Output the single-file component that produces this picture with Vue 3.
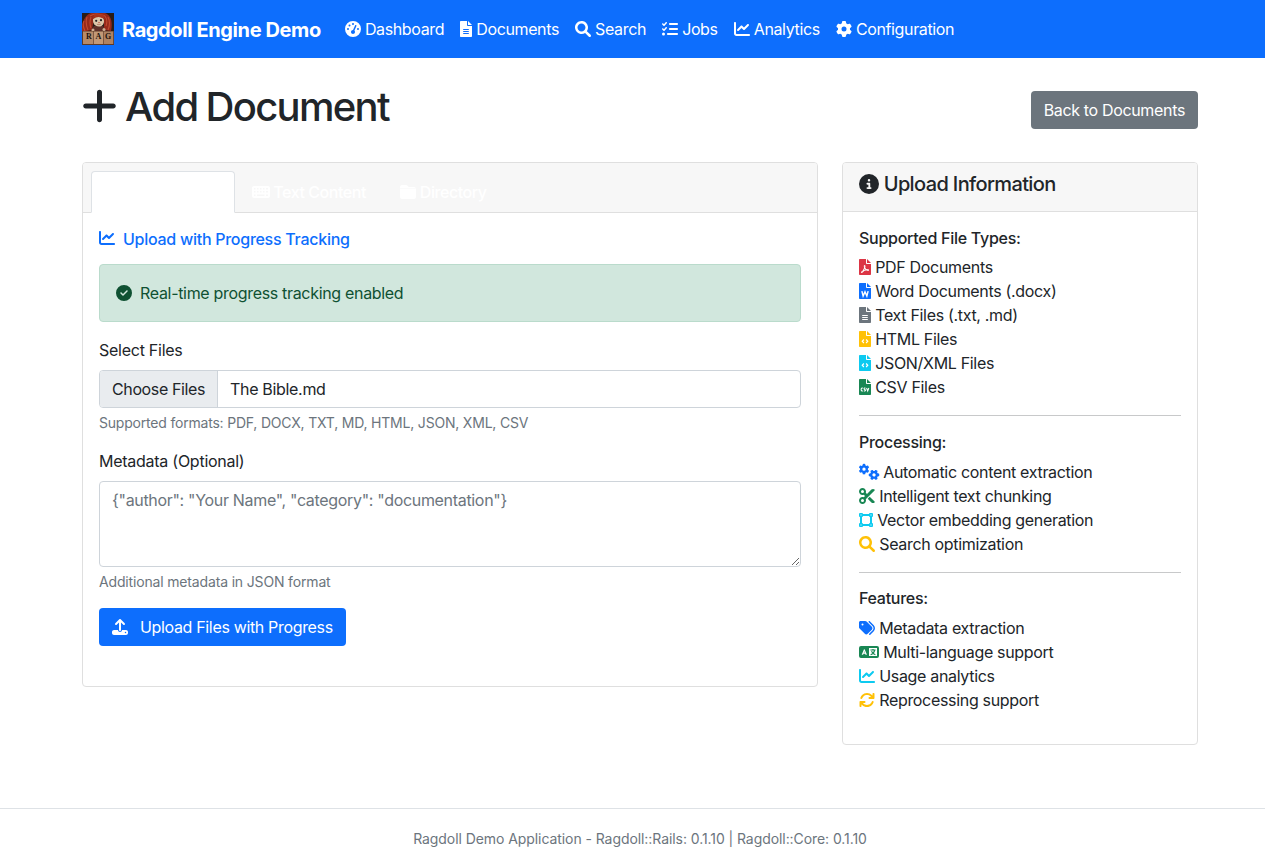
<script setup>
import { h } from 'vue'

const body = 'M32 0C14 0 0 14 0 32V480c0 18 14 32 32 32H352c18 0 32-14 32-32V160H256c-17.7 0-32-14.3-32-32V0H32zM256 0V128H384L256 0z'

const icons = {
  gauge: [512, 'M0 256a256 256 0 1 1 512 0A256 256 0 1 1 0 256zM288 96a32 32 0 1 0 -64 0 32 32 0 1 0 64 0zM256 416c35.3 0 64-28.7 64-64c0-17.4-6.9-33.1-18.1-44.6L366 161.7c5.3-12.1-.2-26.3-12.3-31.6s-26.3 .2-31.6 12.3L257.9 288c-.6 0-1.3 0-1.9 0c-35.3 0-64 28.7-64 64s28.7 64 64 64zM176 144a32 32 0 1 0 -64 0 32 32 0 1 0 64 0zM96 288a32 32 0 1 0 0-64 32 32 0 1 0 0 64zm352-32a32 32 0 1 0 -64 0 32 32 0 1 0 64 0z'],
  file: [384, body + 'M112 256H272c8.8 0 16 7.2 16 16s-7.2 16-16 16H112c-8.8 0-16-7.2-16-16s7.2-16 16-16zm0 64H272c8.8 0 16 7.2 16 16s-7.2 16-16 16H112c-8.8 0-16-7.2-16-16s7.2-16 16-16zm0 64H272c8.8 0 16 7.2 16 16s-7.2 16-16 16H112c-8.8 0-16-7.2-16-16s7.2-16 16-16z'],
  search: [512, 'M500.3 443.7l-119.7-119.7c27.22-40.41 40.65-90.9 33.46-144.7C401.8 87.79 326.8 13.32 235.2 1.723C99.01-15.51-15.51 99.01 1.724 235.2c11.6 91.64 86.08 166.7 177.6 178.9c53.8 7.189 104.3-6.236 144.7-33.46l119.7 119.7c15.62 15.62 40.95 15.62 56.57 0C515.9 484.7 515.9 459.3 500.3 443.7zM79.1 208c0-70.58 57.42-128 128-128s128 57.42 128 128c0 70.58-57.42 128-128 128S79.1 278.6 79.1 208z'],
  tasks: [512, 'M152.1 38.2c9.9 8.9 10.7 24 1.8 33.9l-72 80c-4.4 4.9-10.6 7.8-17.2 7.9s-12.9-2.4-17.6-7L7 113C-2.3 103.6-2.3 88.4 7 79s24.6-9.4 33.9 0l22.1 22.1 55.1-61.2c8.9-9.9 24-10.7 33.9-1.8zm0 160c9.9 8.9 10.7 24 1.8 33.9l-72 80c-4.4 4.9-10.6 7.8-17.2 7.9s-12.9-2.4-17.6-7L7 273c-9.4-9.4-9.4-24.6 0-33.9s24.6-9.4 33.9 0l22.1 22.1 55.1-61.2c8.9-9.9 24-10.7 33.9-1.8zM224 96c0-17.7 14.3-32 32-32H480c17.7 0 32 14.3 32 32s-14.3 32-32 32H256c-17.7 0-32-14.3-32-32zm0 160c0-17.7 14.3-32 32-32H480c17.7 0 32 14.3 32 32s-14.3 32-32 32H256c-17.7 0-32-14.3-32-32zM160 416c0-17.7 14.3-32 32-32H480c17.7 0 32 14.3 32 32s-14.3 32-32 32H192c-17.7 0-32-14.3-32-32zM48 368a48 48 0 1 1 0 96 48 48 0 1 1 0-96z'],
  chart: [512, 'M64 64c0-17.7-14.3-32-32-32S0 46.3 0 64V400c0 44.2 35.8 80 80 80H480c17.7 0 32-14.3 32-32s-14.3-32-32-32H80c-8.8 0-16-7.2-16-16V64zm406.6 86.6c12.5-12.5 12.5-32.8 0-45.3s-32.8-12.5-45.3 0L320 210.7l-57.4-57.4c-12.5-12.5-32.8-12.5-45.3 0l-112 112c-12.5 12.5-12.5 32.8 0 45.3s32.8 12.5 45.3 0L240 221.3l57.4 57.4c12.5 12.5 32.8 12.5 45.3 0l128-128z'],
  gear: [512, 'M495.9 166.6c3.2 8.7 .5 18.4-6.4 24.6l-43.3 39.4c1.1 8.3 1.7 16.8 1.7 25.4s-.6 17.1-1.7 25.4l43.3 39.4c6.9 6.2 9.6 15.9 6.4 24.6c-4.4 11.9-9.7 23.3-15.8 34.3l-4.7 8.1c-6.6 11-14 21.4-22.1 31.2c-5.9 7.2-15.7 9.6-24.5 6.8l-55.7-17.7c-13.4 10.3-28.2 18.9-44 25.4l-12.5 57.1c-2 9.1-9 16.3-18.2 17.8c-13.8 2.3-28 3.5-42.5 3.5s-28.7-1.2-42.5-3.5c-9.2-1.5-16.2-8.7-18.2-17.8l-12.5-57.1c-15.8-6.5-30.6-15.1-44-25.4L83.1 425.9c-8.8 2.8-18.6 .3-24.5-6.8c-8.1-9.8-15.5-20.2-22.1-31.2l-4.7-8.1c-6.1-11-11.4-22.4-15.8-34.3c-3.2-8.7-.5-18.4 6.4-24.6l43.3-39.4C64.6 273.1 64 264.6 64 256s.6-17.1 1.7-25.4L22.4 191.2c-6.9-6.2-9.6-15.9-6.4-24.6c4.4-11.9 9.7-23.3 15.8-34.3l4.7-8.1c6.6-11 14-21.4 22.1-31.2c5.9-7.2 15.7-9.6 24.5-6.8l55.7 17.7c13.4-10.3 28.2-18.9 44-25.4l12.5-57.1c2-9.1 9-16.3 18.2-17.8C227.3 1.2 241.5 0 256 0s28.7 1.2 42.5 3.5c9.2 1.5 16.2 8.7 18.2 17.8l12.5 57.1c15.8 6.5 30.6 15.1 44 25.4l55.7-17.7c8.8-2.8 18.6-.3 24.5 6.8c8.1 9.8 15.5 20.2 22.1 31.2l4.7 8.1c6.1 11 11.4 22.4 15.8 34.3zM256 336a80 80 0 1 0 0-160 80 80 0 1 0 0 160z'],
  plus: [448, 'M256 80c0-17.7-14.3-32-32-32s-32 14.3-32 32V224H48c-17.7 0-32 14.3-32 32s14.3 32 32 32H192V432c0 17.7 14.3 32 32 32s32-14.3 32-32V288H400c17.7 0 32-14.3 32-32s-14.3-32-32-32H256V80z'],
  keyboard: [576, 'M64 64C28.7 64 0 92.7 0 128V384c0 35.3 28.7 64 64 64H512c35.3 0 64-28.7 64-64V128c0-35.3-28.7-64-64-64H64zM64 128h48v48H64zM160 128h48v48h-48zM256 128h48v48h-48zM352 128h48v48h-48zM448 128h64v48h-64zM64 224h48v48H64zM160 224h48v48h-48zM256 224h48v48h-48zM352 224h48v48h-48zM448 224h64v48h-64zM64 336h48v48H64zM160 336h240v48H160zM448 336h64v48h-64z'],
  folder: [512, 'M64 480H448c35.3 0 64-28.7 64-64V160c0-35.3-28.7-64-64-64H288c-10.1 0-19.6-4.7-25.6-12.8L243.2 57.6C231.1 41.5 212.1 32 192 32H64C28.7 32 0 60.7 0 96V416c0 35.3 28.7 64 64 64zM0 132V150H512V132z'],
  check: [512, 'M256 512A256 256 0 1 0 256 0a256 256 0 1 0 0 512zM369 209L241 337c-9.4 9.4-24.6 9.4-33.9 0l-64-64c-9.4-9.4-9.4-24.6 0-33.9s24.6-9.4 33.9 0l47 47L335 175c9.4-9.4 24.6-9.4 33.9 0s9.4 24.6 0 33.9z'],
  info: [512, 'M256 512A256 256 0 1 0 256 0a256 256 0 1 0 0 512zM216 336h24V272H216c-13.3 0-24-10.7-24-24s10.7-24 24-24h48c13.3 0 24 10.7 24 24v88h8c13.3 0 24 10.7 24 24s-10.7 24-24 24H216c-13.3 0-24-10.7-24-24s10.7-24 24-24zm40-208a32 32 0 1 1 0 64 32 32 0 1 1 0-64z'],
  upload: [512, 'M288 109.3V352c0 17.7-14.3 32-32 32s-32-14.3-32-32V109.3l-73.4 73.4c-12.5 12.5-32.8 12.5-45.3 0s-12.5-32.8 0-45.3l128-128c12.5-12.5 32.8-12.5 45.3 0l128 128c12.5 12.5 12.5 32.8 0 45.3s-32.8 12.5-45.3 0L288 109.3zM64 352H192c0 35.3 28.7 64 64 64s64-28.7 64-64H448c35.3 0 64 28.7 64 64v32c0 35.3-28.7 64-64 64H64c-35.3 0-64-28.7-64-64V416c0-35.3 28.7-64 64-64zM432 456a24 24 0 1 0 0-48 24 24 0 1 0 0 48z'],
  pdf: [384, 'M181.9 256.1c-5-16-4.9-46.9-2-46.9 8.4 0 7.6 36.9 2 46.9zm-1.7 47.2c-7.7 20.2-17.3 43.3-28.4 62.7 18.3-7 39-17.2 62.9-21.9-12.7-9.6-24.9-23.4-34.5-40.8zM86.1 428.1c0 .8 13.2-5.4 34.9-40.2-6.7 6.3-29.1 24.5-34.9 40.2zM248 160h136v328c0 13.3-10.7 24-24 24H24c-13.3 0-24-10.7-24-24V24C0 10.7 10.7 0 24 0h200v136c0 13.2 10.8 24 24 24zm-8 171.8c-20-12.2-33.3-29-42.7-53.8 4.5-18.5 11.6-46.6 6.2-64.2-4.7-29.4-42.4-26.5-47.8-6.8-5 18.3-.4 44.1 8.1 77-11.6 27.6-28.7 64.6-40.8 85.8-.1 0-.1.1-.2.1-27.1 13.9-73.6 44.5-54.5 68 5.6 6.9 16 10 21.5 10 17.9 0 35.7-18 61.1-61.8 25.8-8.5 54.1-19.1 79-23.2 21.7 11.8 47.1 19.5 64 19.5 29.2 0 31.2-32 19.7-43.4-13.9-13.6-54.3-9.7-73.6-7.2zM256 0V128H384L256 0zm46.9 360.3c4.1-2.7-2.5-11.9-42.8-9 37.1 15.8 42.8 9 42.8 9z', 'M180 215V285L120 410M180 285L225 340L310 362M130 385L225 345', 22],
  word: [384, body, 'M92 262L132 420L192 280L252 420L292 262', 46],
  code: [384, body, 'M156 272L104 328L156 384M228 272L280 328L228 384', 38],
  csv: [384, body, 'M122 296C94 280 68 300 68 336S94 392 122 376M206 296C186 282 158 288 160 312C164 344 208 330 208 360C208 388 174 388 156 376M242 288L278 384L314 288', 34],
  cut: [512, 'M256 192l-39.5-39.5c4.9-12.6 7.5-26.2 7.5-40.5C224 50.1 173.9 0 112 0S0 50.1 0 112s50.1 112 112 112c14.3 0 27.9-2.7 40.5-7.5L192 256l-39.5 39.5c-12.6-4.9-26.2-7.5-40.5-7.5C50.1 288 0 338.1 0 400s50.1 112 112 112s112-50.1 112-112c0-14.3-2.7-27.9-7.5-40.5L499.2 76.8c7.1-7.1 7.1-18.5 0-25.6c-28.3-28.3-74.1-28.3-102.4 0L256 192zm22.6 150.6L396.8 460.8c28.3 28.3 74.1 28.3 102.4 0c7.1-7.1 7.1-18.5 0-25.6L342.6 278.6l-64 64zM64 112a48 48 0 1 1 96 0 48 48 0 1 1 -96 0zm48 240a48 48 0 1 1 0 96 48 48 0 1 1 0-96z'],
  vector: [448, 'M32 32H96Q128 32 128 64H320Q320 32 352 32H416Q448 32 448 64V128Q448 160 416 160V352Q448 352 448 384V448Q448 480 416 480H352Q320 480 320 448H128Q128 480 96 480H32Q0 480 0 448V384Q0 352 32 352V160Q0 160 0 128V64Q0 32 32 32zM128 128Q128 160 96 160V352Q128 352 128 384H320Q320 352 352 352V160Q320 160 320 128zM48 80V112H80V80zM368 80V112H400V80zM48 400V432H80V400zM368 400V432H400V400z'],
  tags: [512, 'M345 39.1L472.8 168.4c52.4 53 52.4 138.2 0 191.2L360.8 472.9c-9.3 9.4-24.5 9.5-33.9 .2s-9.5-24.5-.2-33.9L438.6 325.9c33.9-34.3 33.9-89.4 0-123.7L310.9 72.9c-9.3-9.4-9.2-24.6 .2-33.9s24.6-9.2 33.9 .2zM0 229.5V80C0 53.5 21.5 32 48 32H197.5c17 0 33.3 6.7 45.3 18.7l168 168c25 25 25 65.5 0 90.5L277.3 442.7c-25 25-65.5 25-90.5 0l-168-168C6.7 262.7 0 246.5 0 229.5zM144 144a32 32 0 1 0 -64 0 32 32 0 1 0 64 0z'],
  language: [640, 'M64 64H576Q640 64 640 128V384Q640 448 576 448H64Q0 448 0 384V128Q0 64 64 64zM320 128V384H576V128zM160 165L86 346H130L143 312H197L210 346H254L180 165zM170 228L185 274H155z'],
  sync: [512, 'M105.1 202.6c7.7-21.8 20.2-42.3 37.8-59.8c62.5-62.5 163.8-62.5 226.3 0L386.3 160H336c-17.7 0-32 14.3-32 32s14.3 32 32 32H463.5c0 0 0 0 0 0h.4c17.7 0 32-14.3 32-32V64c0-17.7-14.3-32-32-32s-32 14.3-32 32v51.2L414.4 97.6c-87.5-87.5-229.3-87.5-316.8 0C73.2 122 55.6 150.7 44.8 181.4c-5.9 16.7 2.9 34.9 19.5 40.8s34.9-2.9 40.8-19.5zM39 289.3c-5 1.5-9.8 4.2-13.7 8.2c-4 4-6.7 8.8-8.1 14c-.3 1.2-.6 2.5-.8 3.8c-.3 1.7-.4 3.4-.4 5.1V448c0 17.7 14.3 32 32 32s32-14.3 32-32V396.9l17.6 17.5 0 0c87.5 87.4 229.3 87.4 316.7 0c24.4-24.4 42.1-53.1 52.9-83.7c5.9-16.7-2.9-34.9-19.5-40.8s-34.9 2.9-40.8 19.5c-7.7 21.8-20.2 42.3-37.8 59.8c-62.5 62.5-163.8 62.5-226.3 0l-.1-.1L125.6 352H176c17.7 0 32-14.3 32-32s-14.3-32-32-32H48.4c-1.6 0-3.2 .1-4.8 .3s-3.1 .5-4.6 1z']
}

// Renders one icon at 1em high; an optional third entry is a mark stroked in white on top.
const Icon = ({ name }) => {
  if (name === 'gears') {
    return h('svg', { class: 'icon', viewBox: '0 0 640 512', width: '1.25em', height: '1em' }, [
      h('path', { d: icons.gear[1], 'fill-rule': 'evenodd', transform: 'translate(160 164) scale(.66) translate(-256 -256)' }),
      h('path', { d: icons.gear[1], 'fill-rule': 'evenodd', transform: 'translate(480 348) rotate(30) scale(.66) translate(-256 -256)' })
    ])
  }
  const [w, d, mark, sw] = icons[name]
  const parts = [h('path', { d, 'fill-rule': 'evenodd' })]
  if (mark) parts.push(h('path', { d: mark, fill: 'none', stroke: '#fff', 'stroke-width': sw }))
  if (name === 'language') {
    parts.push(h('path', { d: 'M366 192H530M448 160V192M500 200C488 270 440 320 372 346M400 230C430 290 470 326 524 346', fill: 'none', stroke: 'currentColor', 'stroke-width': 38 }))
  }
  return h('svg', { class: 'icon', viewBox: `0 0 ${w} 512`, width: `${w / 512}em`, height: '1em' }, parts)
}

const nav = [
  ['gauge', 'Dashboard'], ['file', 'Documents'], ['search', 'Search'],
  ['tasks', 'Jobs'], ['chart', 'Analytics'], ['gear', 'Configuration']
]
const sections = [
  { title: 'Supported File Types:', items: [
    ['pdf', 'danger', 'PDF Documents'], ['word', 'primary', 'Word Documents (.docx)'],
    ['file', 'secondary', 'Text Files (.txt, .md)'], ['code', 'warning', 'HTML Files'],
    ['code', 'info', 'JSON/XML Files'], ['csv', 'success', 'CSV Files']] },
  { title: 'Processing:', items: [
    ['gears', 'primary', 'Automatic content extraction'], ['cut', 'success', 'Intelligent text chunking'],
    ['vector', 'info', 'Vector embedding generation'], ['search', 'warning', 'Search optimization']] },
  { title: 'Features:', items: [
    ['tags', 'primary', 'Metadata extraction'], ['language', 'success', 'Multi-language support'],
    ['chart', 'info', 'Usage analytics'], ['sync', 'warning', 'Reprocessing support']] }
]
</script>

<template>
  <div class="page">
    <nav class="navbar">
      <a class="brand">
        <svg class="logo" viewBox="0 0 32 32" width="32" height="32">
          <rect width="32" height="32" fill="#2a1c17" />
          <path d="M0 19C-1 10 3 2 9 0H23C29 2 31 9 29 18L22 17V5H12L10 17Z" fill="#96291a" />
          <path d="M2 8Q0 12 3 18M5 4Q3 10 6 17M9 4Q7 10 9 15M26 4Q29 10 26 17M23 3Q26 7 24 13M8 3Q14 -1 23 3" fill="none" stroke="#c04a30" stroke-width="1.1" />
          <path d="M8 19L12 13H21L25 19Z" fill="#5f3029" />
          <path d="M11 6Q16 2.5 21.5 5.5Q23.2 10 19.5 13Q16.5 14.3 13.5 12.5Q10.5 10 11 6Z" fill="#dcc6a9" />
          <path d="M10.5 7Q13 1 22.5 6L21.5 1.5H12Z" fill="#a8351f" />
          <circle cx="14.2" cy="7.8" r="1.1" fill="#202024" />
          <circle cx="19" cy="7.2" r="1.1" fill="#202024" />
          <circle cx="17" cy="9.6" r=".7" fill="#b8301f" />
          <path d="M15 11.3Q17 12.3 19 11" fill="none" stroke="#a5574a" stroke-width=".6" />
          <circle cx="11" cy="17" r="1.5" fill="#cfae90" />
          <circle cx="22" cy="16.4" r="1.5" fill="#cfae90" />
          <rect y="18" width="32" height="14" fill="#5d3a28" />
          <rect x="1" y="18.5" width="10.4" height="12.5" fill="#b58a6a" />
          <rect x="12" y="18.5" width="9" height="12.5" fill="#c29876" />
          <rect x="21.6" y="18.5" width="9.6" height="12.5" fill="#ae8262" />
          <g class="tile" text-anchor="middle">
            <text x="7" y="26">R</text><text x="16.5" y="26">A</text><text x="26.2" y="26">G</text>
          </g>
        </svg>
        <span class="brand-name">Ragdoll Engine Demo</span>
      </a>
      <a v-for="[icon, label] in nav" :key="label" class="nav-link"><Icon :name="icon" />{{ ' ' + label }}</a>
    </nav>

    <main class="container">
      <header class="heading">
        <h1><Icon name="plus" /> Add Document</h1>
        <a class="btn secondary-btn">Back to Documents</a>
      </header>

      <div class="columns">
        <section class="card main-card">
          <div class="card-header tabs">
            <a class="tab active"></a>
            <a class="tab"><Icon name="keyboard" /> Text Content</a>
            <a class="tab"><Icon name="folder" /> Directory</a>
          </div>
          <div class="card-body">
            <h6 class="track-title"><Icon name="chart" /><span>Upload with Progress Tracking</span></h6>
            <div class="alert"><Icon name="check" /><span>Real-time progress tracking enabled</span></div>

            <div class="field">
              <label>Select Files</label>
              <div class="file-input"><span class="choose">Choose Files</span><span class="filename">The Bible.md</span></div>
              <div class="form-text formats">Supported formats: PDF, DOCX, TXT, MD, HTML, JSON, XML, CSV</div>
            </div>
            <div class="field">
              <label>Metadata (Optional)</label>
              <textarea placeholder='{"author": "Your Name", "category": "documentation"}'></textarea>
              <div class="form-text">Additional metadata in JSON format</div>
            </div>
            <a class="btn upload-btn"><Icon name="upload" /><span>Upload Files with Progress</span></a>
          </div>
        </section>

        <aside class="card side-card">
          <div class="card-header"><h5><Icon name="info" /> Upload Information</h5></div>
          <div class="card-body">
            <template v-for="(s, i) in sections" :key="s.title">
              <hr v-if="i" />
              <h6>{{ s.title }}</h6>
              <ul>
                <li v-for="[icon, tone, label] in s.items" :key="label"><Icon :name="icon" :class="tone" />{{ ' ' + label }}</li>
              </ul>
            </template>
          </div>
        </aside>
      </div>
    </main>

    <footer><p>Ragdoll Demo Application - Ragdoll::Rails: 0.1.10 | Ragdoll::Core: 0.1.10</p></footer>
  </div>
</template>

<style>
html, body { overflow: hidden; background: #fff; }
</style>

<style scoped>
* { box-sizing: border-box; }
.page {
  width: 1280px;
  height: 866px;
  color: #212529;
  font: 400 16px/1.5 Inter, "Liberation Sans", sans-serif;
  letter-spacing: -0.32px;
}
h1, h5, h6, ul, p { margin: 0; font-weight: 500; line-height: 1.2; }
.icon { fill: currentColor; vertical-align: -0.125em; overflow: visible; }
.navbar { display: flex; align-items: center; height: 58px; padding-left: 82px; background: #0d6efd; color: #fff; }
.brand { display: flex; align-items: center; gap: 8px; margin-right: 16px; font-size: 20px; font-weight: 700; letter-spacing: -0.4px; }
.brand-name { padding-top: 2px; }
.logo { display: block; }
.tile { font: 700 8px "Liberation Serif", serif; fill: #20130d; letter-spacing: 0; }
.nav-link { padding: 8px; white-space: nowrap; letter-spacing: -0.37px; }
.container { width: 1116px; margin-left: 82px; padding-top: 24px; }
.heading { display: flex; justify-content: space-between; align-items: center; height: 56px; margin-bottom: 24px; }
h1 { margin-bottom: 6px; font-size: 40px; letter-spacing: -1.7px; word-spacing: -0.9px; }
.btn { display: inline-flex; height: 38px; padding: 7px 13px; border-radius: 4px; color: #fff; white-space: nowrap; letter-spacing: -0.34px; }
.secondary-btn { background: #6c757d; }
.upload-btn { align-items: center; gap: 12px; background: #0d6efd; }
.columns { display: flex; gap: 24px; align-items: flex-start; }
.card { border: 1px solid #dfdfdf; border-radius: 4px; background: #fff; }
.main-card { width: 736px; }
.side-card { width: 356px; }
.card-header { padding: 8px 16px; border-bottom: 1px solid #dfdfdf; background: #f7f7f7; border-radius: 3px 3px 0 0; }
.tabs { display: flex; height: 50px; padding: 8px 8px 0; }
.tab { height: 42px; padding: 8px 16px; border: 1px solid transparent; color: #fff; font-weight: 500; white-space: nowrap; letter-spacing: -0.44px; }
.tab.active { width: 143.5px; border-color: #dee2e6 #dee2e6 #fff; border-radius: 4px 4px 0 0; background: #fff; }
.card-body { padding: 16px; }
.main-card .card-body { padding-bottom: 40px; }
h6 { font-size: 16px; letter-spacing: -0.27px; }
.track-title { display: flex; gap: 8px; height: 19px; margin-bottom: 16px; padding-top: 1px; color: #0d6efd; }
.alert { display: flex; align-items: center; gap: 8px; height: 58px; margin-bottom: 16px; padding: 0 16px; border: 1px solid #badbcc; border-radius: 4px; background: #d1e7dd; color: #0f5132; }
.field { margin-bottom: 16px; }
label { display: block; margin-bottom: 8px; letter-spacing: -0.26px; }
.file-input { display: flex; height: 38px; border: 1px solid #ced4da; border-radius: 4px; overflow: hidden; }
.choose { padding: 6px 12px; border-right: 1px solid #ced4da; background: #e9ecef; letter-spacing: -0.38px; }
.filename { padding: 6px 12px; }
textarea { display: block; width: 100%; height: 86px; padding: 6px 12px; border: 1px solid #ced4da; border-radius: 4px; font: inherit; letter-spacing: inherit; outline: none; }
textarea::placeholder { color: #6c757d; opacity: 1; }
.form-text { margin-top: 4px; color: #6c757d; font-size: 14px; letter-spacing: -0.16px; }
.formats { letter-spacing: -0.2px; }
h5 { margin-bottom: 7px; padding-top: 1px; font-size: 20px; letter-spacing: -0.63px; }
.side-card h6 { margin-bottom: 7.4px; padding-top: 0.8px; }
.side-card h6:last-of-type { margin-bottom: 8.2px; padding-top: 0; }
.side-card ul { margin-bottom: 16px; padding: 0; list-style: none; font-weight: 400; line-height: 24px; }
hr { height: 1px; margin: 16px 0; border: 0; background: #c8c9ca; }
.danger { color: #dc3545; }
.primary { color: #0d6efd; }
.secondary { color: #6c757d; }
.warning { color: #ffc107; }
.info { color: #0dcaf0; }
.success { color: #198754; }
footer { margin-top: 63px; padding-top: 19px; border-top: 1px solid #dee2e6; color: #6c757d; font-size: 14px; text-align: center; letter-spacing: -0.07px; }
footer p { font-weight: 400; line-height: 21px; }
</style>
